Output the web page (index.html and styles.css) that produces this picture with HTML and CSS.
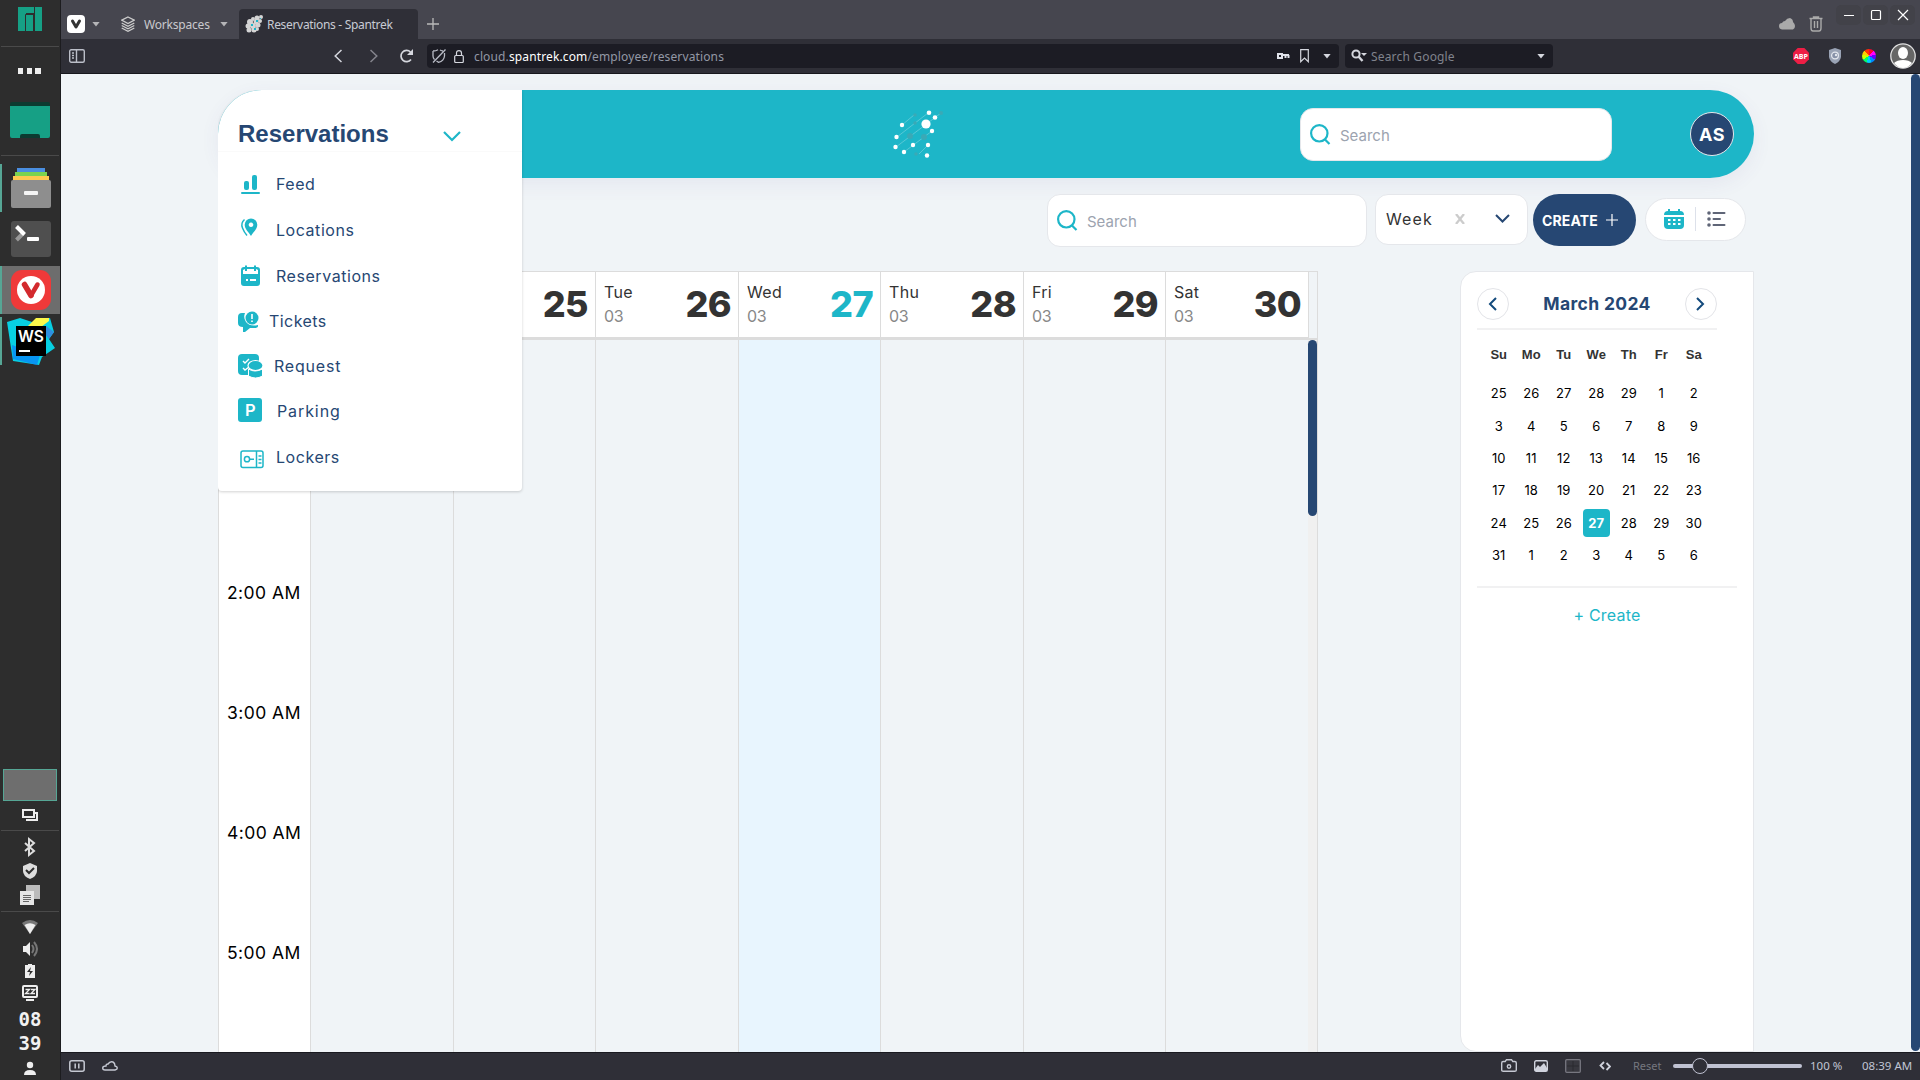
FILE: index.html
```html
<!DOCTYPE html>
<html lang="en">
<head>
<meta charset="utf-8">
<title>Reservations - Spantrek</title>
<link rel="stylesheet" href="styles.css">
</head>
<body>
<div class="desktop">
  <aside class="dock">
    <svg class="slot" width="60" height="46"><path fill="#16a085" d="M18 7h16v6h-8v18h-8zM26 15h7v16h-7zM35 7h7v24h-7z"/><path fill="none" stroke="#2d2d2d" d="M34.500 7v8M25.500 31V14.500H34"/></svg>
    <hr class="dock-line">
    <svg class="slot" width="60" height="48"><path fill="#eee" d="M18 21h5v6h-5zM27 21h5v6h-5zM35 21h6v6h-6z"/></svg>
    <svg class="slot" width="60" height="60"><rect x="10" y="7" width="40" height="36" rx="2" fill="#0c3b30"/><path fill="#16a085" d="M10 11h40v30q0 2-2 2h-8v-2q0-2-2-2H22q-2 0-2 2v2h-8q-2 0-2-2z"/></svg>
    <hr class="dock-line">
    <div class="tasks">
      <div class="task"><svg width="60" height="48"><path fill="#4a8ee0" d="M17 4h28v6H17z"/><path fill="#7bd34f" d="M15 8h32v6H15z"/><path fill="#ffc94f" d="M13 12h36v8H13z"/><rect x="11" y="16" width="40" height="28" rx="2" fill="#8e8e8e"/><rect x="24" y="27" width="14" height="4" rx="1" fill="#f5f5f5"/></svg></div>
      <div class="task idle"><svg width="60" height="48"><rect x="11" y="6" width="40" height="36" rx="3" fill="#4f4f4f"/><path d="M16.500 25l7-7" stroke="#999" stroke-width="4"/><path d="M16.500 11.500l8 8" stroke="#fff" stroke-width="4"/><rect x="27" y="22" width="12" height="4" rx="1" fill="#fff"/></svg></div>
      <div class="task active"><svg width="60" height="48"><rect x="11" y="4" width="40" height="40" rx="11" fill="#ef3939"/><circle cx="31" cy="24" r="14" fill="#fff"/><path d="M24.500 18.500l6.500 11" fill="none" stroke="#d32a2e" stroke-width="5.500" stroke-linecap="round"/><path d="M31 29.500l6.500-11" fill="none" stroke="#d32a2e" stroke-width="4.500" stroke-linecap="round"/></svg></div>
      <div class="task"><svg width="60" height="48"><path fill="#07cfe2" d="M7 5l13-4 12 4 18-4 4 14-5 7 6 9-13 9-3 8-26-4z"/><path fill="#087cfa" d="M12 28l28 10-3 10-24-6z" opacity=".7"/><path fill="#2f8fe0" d="M54 15l-8-6-3 6 6 7z"/><path fill="#fcf84a" d="M28 9l8-8h13v3l-8 6z"/><path fill="#000" d="M16 9h30v30H16z"/><text x="18" y="25" class="ws" textLength="26" lengthAdjust="spacingAndGlyphs">WS</text><path fill="#fff" d="M19 33h11v2H19z"/></svg></div>
    </div>
    <div class="dock-tray">
      <div class="pager"></div>
      <svg class="slot" width="60" height="29"><path fill="none" stroke="#eee" stroke-width="2" d="M23 9h11v7H23z"/><path fill="none" stroke="#eee" stroke-width="2" d="M35 12h2v7H26"/></svg>
      <hr class="dock-line">
      <svg class="slot pad4" width="60" height="24"><path fill="none" stroke="#ddd" stroke-width="2" d="M25 8l9 8-5 4V4l5 4-9 8"/></svg>
      <svg class="slot" width="60" height="24"><path fill="#ddd" d="M30 4l7 3v5q0 5-7 8-7-3-7-8V7z"/><path fill="none" stroke="#2d2d2d" stroke-width="2" d="M26 11l3 3 5-5"/></svg>
      <svg class="slot" width="60" height="24"><path fill="#bbb" d="M26 2h14v14H26z"/><path fill="#e6e6e6" d="M20 8h14v14H20z"/><path stroke="#666" d="M23 12.500h8M23 14.500h8M23 16.500h8M23 18.500h6"/></svg>
      <hr class="dock-line low">
      <svg class="slot pad4" width="60" height="22"><path fill="#777" d="M22 7q8-6 16 0l-8 11z"/><path fill="#eee" d="M24.500 9q5.500-3.500 11 0L30 18z"/></svg>
      <svg class="slot" width="60" height="22"><path fill="#eee" d="M23 8h3l4-4v14l-4-4h-3z"/><path fill="none" stroke="#777" stroke-width="2" d="M32 7q3 4 0 8M34 4q6 7 0 14"/></svg>
      <svg class="slot" width="60" height="22"><path fill="#eee" d="M25 5h3V4h4v1h3v13H25z"/><path fill="#2d2d2d" d="M31 7l-4 5h3l-1 4 4-5h-3z"/></svg>
      <svg class="slot" width="60" height="22"><rect x="23" y="4" width="14" height="11" rx="1" fill="none" stroke="#eee" stroke-width="2"/><path fill="none" stroke="#eee" stroke-width="1.300" d="M25.500 7.500h4l-4 4h4M31 7.500h4l-4 4h4"/><path fill="#eee" d="M26 17h8v2h-8z"/></svg>
      <div class="clock">08<br>39</div>
      <svg class="slot" width="60" height="23"><circle cx="30" cy="8" r="3.200" fill="#eee"/><path fill="#eee" d="M24 18q0-5 6-5t6 5z"/></svg>
    </div>
  </aside>

  <section class="browser">
    <div class="tabstrip">
      <svg width="18" height="18"><rect width="18" height="18" rx="4" fill="#fff"/><path d="M5.500 6l3.500 6 3.500-6" fill="none" stroke="#333" stroke-width="3" stroke-linecap="round" stroke-linejoin="round"/></svg>
      <i class="caret dim c1"></i>
      <svg class="layers" width="14" height="16" fill="none" stroke="#ccc" stroke-width="1.300"><path d="M7 1l6.300 3.200L7 7.500.700 4.200zM.700 7L7 10.300 13.300 7M.700 9.500L7 12.800l6.300-3.300M.700 12L7 15.300l6.300-3.300"/></svg>
      <span class="workspaces">Workspaces</span>
      <i class="caret dim"></i>
      <div class="tab">
        <svg width="18" height="18"><g fill="#d5d5d5"><circle cx="12" cy="3" r="2.500"/><circle cx="16" cy="2" r="2"/><circle cx="8" cy="4" r="2"/><circle cx="5" cy="7" r="3"/><circle cx="11" cy="7" r="2.500"/><circle cx="15" cy="6" r="2"/><circle cx="3" cy="11" r="2.500"/><circle cx="8" cy="11" r="3"/><circle cx="13" cy="10" r="2.500"/><circle cx="4" cy="15" r="2.500"/><circle cx="9" cy="15" r="2.500"/><circle cx="12" cy="14" r="2"/></g><path fill="#1db6c8" d="M6 9h2v2H6zM11 5h2v2h-2zM9 13h2v2H9zM15 3h1v1h-1z"/></svg>
        <span class="tab-title">Reservations - Spantrek</span>
      </div>
      <svg class="plus-tab" width="12" height="12"><path d="M6 0v12M0 6h12" stroke="#bbb" stroke-width="1.300"/></svg>
      <svg class="push" width="16" height="12" fill="#aaa"><path d="M3 11.500Q0 11 0 8t3-3q1-2 3-2 2-3 5-3 3 1 3 4 2 2 2 4 0 3-2 3.500z"/></svg>
      <svg class="trash" width="14" height="16" fill="none" stroke="#aaa" stroke-width="1.400"><path d="M.500 2.500h13M4.500 2V1h5v1M2 3v9q0 3 2 3h6q2 0 2-3V3M5.500 5v7M8.500 5v7"/></svg>
      <div class="winbtns">
        <svg width="25" height="20"><path d="M8 10.500h10" stroke="#fff" stroke-width="1.200"/></svg>
        <svg width="25" height="20"><rect x="8.500" y="5.500" width="9" height="9" rx="1" fill="none" stroke="#fff" stroke-width="1.200"/></svg>
        <svg width="25" height="20"><path d="M8 5l10 10M18 5L8 15" stroke="#fff" stroke-width="1.200"/></svg>
      </div>
    </div>
    <div class="addressbar">
      <svg width="16" height="14" fill="none" stroke="#bbbec8" stroke-width="1.400"><rect x=".700" y=".700" width="14.600" height="12.600" rx="1.500"/><path d="M7.500 1v12M3 4h2M3 6.500h2M3 9h2"/></svg>
      <svg class="back" width="8" height="14" fill="none" stroke="#d5d7de" stroke-width="1.500"><path d="M7.500 1L1.200 7l6.300 6"/></svg>
      <svg class="fwd" width="8" height="14" fill="none" stroke="#85858d" stroke-width="1.500"><path d="M.500 1l6.300 6-6.300 6"/></svg>
      <svg class="reload" width="15" height="14"><path d="M12 10.500A5.600 5.600 0 1 1 11.500 3" fill="none" stroke="#d5d7de" stroke-width="1.700"/><path d="M14 0v6H8z" fill="#d5d7de"/></svg>
      <div class="urlfield">
        <svg width="14" height="14" fill="none" stroke="#b9bcc6" stroke-width="1.300"><path d="M1 2q3 0 5-1.300M8 1q2 1 3 1M1 2v5q0 2 1.500 3.500M12.500 4v3q-.500 5-6 6.300L4.500 12M1 13.500L13.500.500"/></svg>
        <svg class="lock" width="10" height="13" fill="none" stroke="#d5d7de" stroke-width="1.200"><rect x=".700" y="5.500" width="8.600" height="7" rx="1"/><path d="M2.500 5.500V3q0-2.300 2.500-2.300T7.500 3v2.500"/></svg>
        <span class="url">cloud.<b>spantrek.com</b>/employee/reservations</span>
        <svg class="push" width="13" height="8" fill="none" stroke="#e0e2ea" stroke-width="2"><path d="M1 2h4v4H1zM5 3h7M8.500 3v3M11.500 3v3"/></svg>
        <svg class="bm" width="9" height="14" fill="none" stroke="#d5d7de" stroke-width="1.200"><path d="M.700.700h7.600v12L4.500 9 .700 12.700z"/></svg>
        <i class="caret"></i>
      </div>
      <div class="searchfield">
        <svg width="16" height="14"><circle cx="5" cy="5" r="3.600" fill="none" stroke="#d5d7de" stroke-width="2"/><path d="M7.500 7.500l4 4.500" stroke="#d5d7de" stroke-width="2.400"/><path d="M10 4h6l-3 3z" fill="#d5d7de"/></svg>
        <span class="sg">Search Google</span>
        <i class="caret push"></i>
      </div>
      <svg class="abp" width="16" height="16"><path fill="#ed1e45" d="M4.700 0h6.600L16 4.700v6.600L11.300 16H4.700L0 11.300V4.700z"/><text x="1" y="10.800" class="abp-t" textLength="14" lengthAdjust="spacingAndGlyphs">ABP</text></svg>
      <svg class="ext" width="12" height="16"><path fill="#9aa3b5" d="M6 0l6 2v7q-1 5-6 7-5-2-6-7V2z"/><circle cx="6" cy="7.500" r="3.400" fill="#8791a8" stroke="#e3e7ee" stroke-width="1.300"/><circle cx="7" cy="7" r="1.200" fill="#e3e7ee"/></svg>
      <i class="wheel"></i>
      <svg class="profile" width="26" height="26"><circle cx="13" cy="13" r="12.200" fill="#666" stroke="#e0e0e0" stroke-width="1.300"/><ellipse cx="13" cy="10" rx="5" ry="6" fill="#fff"/><path fill="#fff" d="M4 20q3-3 9-3t9 3q-4 5-9 5t-9-5z"/></svg>
    </div>

    <main class="page">
      <header class="topbar">
        <svg class="logo" width="50" height="50" fill="#fff"><path d="M9 15l12-10M4 27L35 3M3 37L48 3M11 42l28-21M26 44l9-9" stroke="#7fd3de" stroke-width=".6" fill="none"/><g fill="#3aa9b6"><circle cx="22" cy="5" r="1.800"/><circle cx="22" cy="13" r="1.800"/><circle cx="17" cy="26" r="3"/><circle cx="31" cy="27" r="3"/><circle cx="23" cy="44" r="1.800"/><circle cx="48" cy="3" r="2"/></g><circle cx="36" cy="2.700" r="2.300"/><circle cx="42" cy="7.500" r="2.300"/><circle cx="33" cy="14" r="4.600"/><circle cx="9" cy="15" r="2.200"/><circle cx="39" cy="21" r="2.200"/><circle cx="3.500" cy="27" r="2.200"/><circle cx="2.500" cy="37" r="2.200"/><circle cx="20" cy="35" r="2.200"/><circle cx="35" cy="35" r="2.200"/><circle cx="11" cy="42" r="2.200"/><circle cx="34" cy="45.500" r="2.200"/></svg>
        <div class="search top-search"><svg width="21" height="21"><circle cx="9.300" cy="9.300" r="8.200"/><path d="M15 15.500l4.500 4.500"/></svg><span>Search</span></div>
        <div class="avatar">AS</div>
      </header>

      <div class="toolbar">
        <div class="search"><svg width="21" height="21"><circle cx="9.300" cy="9.300" r="8.200"/><path d="M15 15.500l4.500 4.500"/></svg><span>Search</span></div>
        <div class="select"><span class="week">Week</span>
          <svg class="clear" width="10" height="10"><path d="M1 0l8 10M9 0L1 10" stroke="#ccc" stroke-width="2.300"/></svg>
          <svg class="chev" width="15" height="9"><path d="M1 1l6.500 6.500L14 1" fill="none" stroke="#264773" stroke-width="2"/></svg></div>
        <div class="create"><span>CREATE</span><svg width="12" height="12"><path d="M6 0v12M0 6h12" stroke="#fff" stroke-width="1.200"/></svg></div>
        <div class="views">
          <svg width="20" height="20"><path fill="#1db6c8" d="M0 6q0-4 4-4V0h2v2h8V0h2v2q4 0 4 4z"/><path fill="#1db6c8" d="M0 8h20v8q0 4-4 4H4q-4 0-4-4z"/><path fill="#fff" d="M4 10h2.500v2H4zM9 10h2.500v2H9zM14 10h2.500v2H14zM4 14h2.500v2H4zM9 14h2.500v2H9zM14 14h2.500v2H14z"/></svg>
          <i class="vline"></i>
          <svg width="19" height="16"><g fill="#5f6577"><circle cx="2" cy="2" r="1.800"/><circle cx="2" cy="8" r="1.800"/><circle cx="2" cy="14" r="1.800"/></g><path d="M6.500 2h11M6.500 8h6.500M6.500 14h11" stroke="#5f6577" stroke-width="2" stroke-linecap="round"/></svg>
        </div>
      </div>

      <div class="content">
        <section class="calendar">
          <div class="cal-row cal-head">
            <div class="cell"></div>
            <div class="cell"></div>
            <div class="cell end"><strong>25</strong></div>
            <div class="cell"><p>Tue<small>03</small></p><strong>26</strong></div>
            <div class="cell now"><p>Wed<small>03</small></p><strong>27</strong></div>
            <div class="cell"><p>Thu<small>03</small></p><strong>28</strong></div>
            <div class="cell"><p>Fri<small>03</small></p><strong>29</strong></div>
            <div class="cell"><p>Sat<small>03</small></p><strong>30</strong></div>
            <div class="gutter"></div>
          </div>
          <div class="cal-row cal-body">
            <div class="col times"><span>2:00 AM</span><span>3:00 AM</span><span>4:00 AM</span><span>5:00 AM</span></div>
            <div class="col"></div><div class="col"></div><div class="col"></div><div class="col today"></div><div class="col"></div><div class="col"></div><div class="col last"></div>
            <div class="track"><div class="thumb"></div></div>
          </div>
        </section>

        <aside class="mini">
          <div class="mini-head">
            <span class="round"><svg width="9" height="14"><path d="M8 1L2 7l6 6"/></svg></span>
            <h2>March 2024</h2>
            <span class="round"><svg width="9" height="14"><path d="M1 1l6 6-6 6"/></svg></span>
          </div>
          <div class="grid wk"><b>Su</b><b>Mo</b><b>Tu</b><b>We</b><b>Th</b><b>Fr</b><b>Sa</b></div>
          <div class="grid days">
            <span>25</span><span>26</span><span>27</span><span>28</span><span>29</span><span>1</span><span>2</span>
            <span>3</span><span>4</span><span>5</span><span>6</span><span>7</span><span>8</span><span>9</span>
            <span>10</span><span>11</span><span>12</span><span>13</span><span>14</span><span>15</span><span>16</span>
            <span>17</span><span>18</span><span>19</span><span>20</span><span>21</span><span>22</span><span>23</span>
            <span>24</span><span>25</span><span>26</span><span class="sel">27</span><span>28</span><span>29</span><span>30</span>
            <span>31</span><span>1</span><span>2</span><span>3</span><span>4</span><span>5</span><span>6</span>
          </div>
          <div class="add">+ Create</div>
        </aside>
      </div>

      <nav class="menu">
        <div class="menu-head"><h1>Reservations</h1><svg width="18" height="11"><path d="M1 1l8 8 8-8" fill="none" stroke="#1db6c8" stroke-width="2.200"/></svg></div>
        <div class="menu-list">
          <div class="item"><svg width="28" height="28"><rect x="6" y="11" width="5" height="9" rx="2"/><rect x="14" y="5" width="5" height="15" rx="2"/><rect x="3" y="22" width="19" height="2" rx="1"/></svg><span>Feed</span></div>
          <div class="item"><svg width="28" height="28"><path fill-rule="evenodd" d="M13 2.500a6.300 6.300 0 0 1 6.300 6.300c0 4.200-3.800 7.200-6.300 11.200-2.500-4-6.300-7-6.300-11.200A6.300 6.300 0 0 1 13 2.500zM13 6.500a2.300 2.300 0 1 0 .01 0z"/><path class="ln" d="M6.500 3.500Q2.500 7 4.500 12q1.500 4 4.500 7.500"/></svg><span>Locations</span></div>
          <div class="item"><svg width="28" height="28"><path fill-rule="evenodd" d="M6 5H7V3.500h2V5h7V3.500h2V5h1q3 0 3 3v13q0 3-3 3H6q-3 0-3-3V8q0-3 3-3zM5 8v4h15V8l-2-1v2h-2V7H9v2H7V7zM8 17v2h2v-2zM12 17v2h6v-2z"/></svg><span>Reservations</span></div>
          <div class="item r44 tickets"><svg width="28" height="28"><path d="M4 6h3q-2 5 1 9 4 5 12 3v1q0 2-4 2h-4l-5 4h-2v-5q-5 0-5-4v-6q0-4 4-4z"/><circle cx="14" cy="11" r="6.500"/><path stroke="#fff" stroke-width="1.600" d="M14 7v5M14 13.500v1.600"/></svg><span>Tickets</span></div>
          <div class="item r45 request"><svg width="28" height="28"><rect y="2" width="21" height="21" rx="4"/><path d="M5 9l2 2 4-4M5 16l2 2 4-3" fill="none" stroke="#fff" stroke-width="1.400"/><path stroke="#fff" stroke-width="1" d="M10.500 17q6 4 14 0v7q-7 4-14 0z"/><ellipse cx="17.500" cy="13.500" rx="7.500" ry="5" stroke="#fff" stroke-width="1.200"/></svg><span>Request</span></div>
          <div class="item parking"><svg width="28" height="28"><rect y="1" width="24" height="24" rx="3"/><text x="7" y="18.800" class="pk">P</text></svg><span>Parking</span></div>
          <div class="item"><svg width="28" height="28"><rect class="ln" x="3" y="8" width="22" height="16.500" rx="2"/><path class="ln" d="M18.500 8v16M20.500 13h3M20.500 16.500h3M20.500 20h3M11 16.200h5"/><circle class="ln" cx="9" cy="16.200" r="2.600"/></svg><span>Lockers</span></div>
        </div>
      </nav>
      <div class="page-scroll"></div>
    </main>

    <footer class="status">
      <svg width="16" height="12" fill="none" stroke="#c5c8d2" stroke-width="1.500"><rect x=".800" y=".800" width="14.400" height="10.400" rx="2"/><path d="M6.200 3.500v5M9.800 3.500v5"/></svg>
      <svg class="cl" width="16" height="10" fill="none" stroke="#c5c8d2" stroke-width="1.400"><path d="M3 9Q.700 9 .700 7T4 5q0-2 2-2 2-3 5-2 2 1 2 4 2.300.500 2.300 2T13 9z"/></svg>
      <svg class="push" width="16" height="13" fill="none" stroke="#c5c8d2" stroke-width="1.400"><path d="M.700 4q0-1.500 1.500-1.500h2L5.500.700h5l1.300 1.800h2q1.500 0 1.500 1.500v7q0 1.300-1.500 1.300H2.200Q.700 12.300.700 11z"/><circle cx="8" cy="7.500" r="1.700"/></svg>
      <svg class="im" width="14" height="12"><rect x=".700" y=".700" width="12.600" height="10.600" rx="1.500" fill="none" stroke="#d0d3dd" stroke-width="1.400"/><path fill="#d0d3dd" d="M1 9l3-4 2 2 4-4 3 5v3H1z"/></svg>
      <svg class="sq" width="16" height="14"><rect x=".700" y=".700" width="14.600" height="12.600" rx="1" fill="#38383f" stroke="#777780" stroke-width="1.300"/><path stroke="#2b2b31" d="M8 2v10M2 7h12"/></svg>
      <svg class="cd" width="12" height="10" fill="none" stroke="#d0d3dd" stroke-width="1.800"><path d="M5 1L1.500 4.500 5 8M7.500 2L11 5.500 7.500 9"/></svg>
      <span class="reset">Reset</span>
      <span class="slider"><i></i></span>
      <span class="pct">100 %</span>
      <span class="time">08:39 AM</span>
    </footer>
  </section>
</div>
</body>
</html>
```
FILE: styles.css
```css
* { box-sizing: border-box; }
body { margin: 0; overflow: hidden; font-family: Inter, "Noto Sans", sans-serif; }
svg { display: block; flex: none; }
.desktop { display: flex; width: 1920px; height: 1080px; }
.push { margin-left: auto !important; }

/* Desktop panel */
.dock { width: 61px; flex: none; background: #2d2d2d; border-right: 1px solid #1c1c1f; display: flex; flex-direction: column; }
.dock-line { width: 58px; height: 1px; border: 0; margin: 0 1px; background: #4a4a4a; flex: none; }
.tasks { display: flex; flex-direction: column; gap: 3px; padding-top: 8px; }
.task { height: 48px; border-left: 2px solid #56a695; }
.task svg { margin-left: -2px; }
.task.idle { border-color: transparent; }
.task.active { background: #6d6d6d; }
.ws { font: 600 16px Inter, sans-serif; fill: #fff; }
.dock-tray { margin-top: auto; display: flex; flex-direction: column; }
.pager { width: 54px; height: 32px; margin-left: 3px; background: #6e6e6e; border: 1px solid #56a695; }
.pad4 { margin-top: 4px; }
.dock-line.low { margin-top: 4px; }
.clock { margin-top: 3px; height: 50px; text-align: center; font: bold 19px/24px "DejaVu Sans Mono", monospace; color: #f2f2f2; }

/* Browser chrome */
.browser { flex: 1; min-width: 0; display: flex; flex-direction: column; font-family: "Noto Sans", sans-serif; }
.tabstrip { height: 39px; background: #46464f; display: flex; align-items: center; padding: 9px 5px 0 6px; flex: none; color: #c9c9cd; font-size: 12px; }
.caret { width: 8px; height: 5px; background: #d5d7de; clip-path: polygon(0 0, 100% 0, 50% 100%); flex: none; }
.caret.dim { background: #b5b5b8; }
.c1 { margin-left: 7px; }
.layers { margin-left: 21px; }
.workspaces { width: 76px; margin-left: 9px; letter-spacing: -.2px; }
.tab { width: 179px; height: 30px; margin-left: 11px; background: #2f2f37; border-radius: 4px 4px 0 0; display: flex; align-items: center; padding-left: 6px; gap: 4px; color: #c8cbd4; white-space: nowrap; }
.tab-title { letter-spacing: -.32px; }
.plus-tab { margin-left: 9px; }
.trash { margin-left: 14px; }
.winbtns { display: flex; gap: 2px; margin: -18px 0 0 13px; }
.winbtns svg { background: #424249; border-radius: 5px; }
.addressbar { height: 35px; background: #2f2f37; border-bottom: 1px solid #18181d; display: flex; align-items: center; padding: 0 4px 0 8px; flex: none; font-size: 12px; }
.back { margin-left: 249px; }
.fwd { margin-left: 28px; }
.reload { margin-left: 21px; }
.urlfield, .searchfield { height: 24px; background: #1c1c24; border-radius: 4px; display: flex; align-items: center; padding-left: 5px; color: #9398a5; }
.urlfield { width: 912px; margin-left: 13px; padding-right: 8px; }
.lock { margin-left: 8px; }
.url { margin-left: 10px; letter-spacing: .13px; white-space: nowrap; }
.url b { font-weight: 400; color: #fff; }
.bm { margin: 0 14px 0 10px; }
.searchfield { width: 208px; margin-left: 6px; padding: 0 8px 0 6px; }
.sg { margin-left: 4px; color: #80838c; letter-spacing: .17px; }
.abp { margin-left: auto; }
.abp-t { font: 700 7.500px "Open Sans", sans-serif; fill: #fff; }
.ext { margin-left: 20px; }
.wheel { width: 14px; height: 14px; margin-left: 21px; border-radius: 50%; background: conic-gradient(#f03 0 40deg, #f0f 0 80deg, #60f 0 120deg, #08f 0 160deg, #0cf 0 200deg, #0f6 0 240deg, #cf0 0 280deg, #fc0 0 320deg, #f30 0); }
.profile { margin-left: 14px; }
.status { height: 28px; background: #2f2f37; border-top: 1px solid #1a1a20; display: flex; align-items: center; padding: 0 8px 2px; font-size: 12px; color: #c0c5d4; flex: none; white-space: nowrap; }
.cl { margin-left: 17px; }
.im { margin-left: 17px; }
.sq { margin-left: 17px; }
.cd { margin-left: 18px; }
.reset { width: 30px; margin-left: 22px; font-size: 11px; color: #75777f; }
.slider { width: 129px; height: 4px; margin-left: 10px; border-radius: 2px; background: #c0c2d2; padding-left: 19px; }
.slider i { display: block; width: 16px; height: 16px; margin-top: -6px; border: 1px solid #c0c2d2; border-radius: 50%; background: #2f2f37; }
.pct { width: 52px; margin-left: 8px; font-size: 11.500px; }
.time { width: 50px; font-size: 11.500px; }

/* Page */
.page { position: relative; height: 978px; background: #f0f4f7; padding: 16px 166px 0 157px; overflow: hidden; font-family: Inter, sans-serif; }
.topbar { height: 88px; background: #1db6c8; border-radius: 44px; box-shadow: 0 6px 20px rgba(80, 70, 140, .07); display: flex; align-items: center; padding: 0 20px 0 675px; }
.logo { margin-top: 1px; }
.search { width: 320px; height: 53px; background: #fff; border: 1px solid #e5e7eb; border-radius: 13px; display: flex; align-items: center; gap: 9px; padding-left: 9px; color: #9ca3af; font-size: 15px; letter-spacing: 0; }
.search svg { fill: none; stroke: #1db6c8; stroke-width: 2.200; }
.search span { margin-top: 1px; }
.top-search { width: 312px; margin: 1px 0 0 357px; }
.avatar { width: 44px; height: 44px; margin-left: auto; border-radius: 50%; background: #264773; border: 1px solid #e5e7eb; color: #fff; font-size: 18px; font-weight: 700; letter-spacing: .4px; display: grid; place-items: center; }
.toolbar { display: flex; align-items: flex-start; padding: 16px 8px 0 829px; height: 93px; }
.select { width: 153px; height: 51px; margin-left: 8px; background: #fff; border: 1px solid #e5e7eb; border-radius: 13px; display: flex; align-items: center; padding: 0 17px 2px 10px; font-size: 16px; color: #333; }
.week { width: 69px; letter-spacing: 1.100px; }
.chev { margin-left: auto; }
.create { width: 103px; height: 52px; margin: 0 0 0 5px; border-radius: 26px; background: #264773; color: #fff; display: flex; align-items: center; gap: 6px; padding-left: 9px; font-size: 14px; font-weight: 700; letter-spacing: .15px; }
.create span { width: 58px; }
.views { width: 101px; height: 43px; margin: 4px 0 0 9px; background: #fff; border: 1px solid #e5e7eb; border-radius: 22px; display: flex; align-items: center; padding: 0 0 2px 18px; }
.vline { width: 1px; height: 24px; margin: 0 11px; background: #dde1ea; }
.content { display: flex; justify-content: space-between; height: 781px; }

/* Week calendar */
.calendar { width: 1100px; height: 800px; border: 1px solid #dcdcdc; }
.cal-row { display: grid; grid-template-columns: 92px 143px 142px 143px 142px 143px 142px 143px 8px; }
.cell { height: 68px; background: #fff; border-right: 1px solid #dcdcdc; border-bottom: 3px solid #dcdcdc; display: flex; justify-content: space-between; align-items: center; padding: 0 7px 2px 8px; color: #333; }
.cell.end { justify-content: flex-end; }
.cell p { margin: 0; font-size: 16px; line-height: 24px; letter-spacing: .3px; }
.cell small { display: block; color: #888; font-size: 16px; letter-spacing: -.3px; }
.cell strong { font-size: 36px; font-weight: 800; letter-spacing: -.6px; }
.cell.now strong { color: #1db6c8; }
.gutter { border-bottom: 2px solid #dcdcdc; }
.col { height: 720px; border-right: 1px solid #dcdcdc; }
.col.last { border: 0; }
.times { background: #fff; padding: 193px 0 0 8px; color: #000; font-size: 17.500px; }
.times span { display: block; height: 120px; line-height: 120px; letter-spacing: .45px; white-space: nowrap; }
.today { background: #e8f5fe; }
.track { margin-left: -1px; background: #f0f0f0; }
.thumb { height: 176px; border-radius: 5px; background: #264773; }

/* Month panel */
.mini { width: 294px; height: 781px; background: #fff; border: 1px solid #e5e7eb; border-radius: 16px 0 0 16px; padding: 16px 16px 0; }
.mini-head { width: 240px; height: 42px; border-bottom: 2px solid #f1f1f2; display: flex; align-items: flex-start; justify-content: space-between; }
.mini-head h2 { margin: 0; font-size: 17.500px; line-height: 32px; font-weight: 700; color: #264773; letter-spacing: .35px; }
.round { width: 32px; height: 32px; border: 1px solid #e3e4e8; border-radius: 50%; display: grid; place-items: center; }
.round svg { margin-right: 1px; }
.round path { fill: none; stroke: #134a7c; stroke-width: 2; }
.grid { display: grid; grid-template-columns: repeat(7, 32.500px); margin-left: 5.500px; text-align: center; }
.wk { margin-top: 17px; font: 700 13px/16px "Liberation Sans", Arial, sans-serif; color: #333; }
.days { margin: 14px 0 0 5.500px; font-size: 13px; font-weight: 400; color: #000; grid-auto-rows: 32.400px; place-items: center; letter-spacing: .1px; }
.sel { width: 27px; height: 28px; line-height: 28px; border-radius: 4px; background: #1db6c8; color: #fff; font-weight: 700; }
.add { margin-top: 15px; border-top: 2px solid #f1f1f2; height: 60px; line-height: 55px; text-align: center; color: #1db6c8; font-size: 16px; letter-spacing: .2px; }

/* Navigation menu, opened over the page */
.menu { position: absolute; left: 157px; top: 16px; width: 304px; height: 401px; background: #fff; border-radius: 44px 0 4px 4px; box-shadow: 0 1px 3px rgba(0, 0, 0, .18); clip-path: inset(0 -4px -6px 0); }
.menu-head { height: 62px; border-bottom: 1px solid #fafafa; display: flex; align-items: center; justify-content: space-between; padding: 31px 61px 0 20px; }
.menu-head h1 { margin: -4px 0 0; font: 700 24px/28px "Liberation Sans", Arial, sans-serif; color: #264773; }
.menu-list { margin-top: 9px; }
.item { height: 46px; display: flex; align-items: center; padding-left: 20px; font-size: 16px; letter-spacing: .55px; color: #264773; }
.item svg { fill: #1db6c8; margin-right: 10px; }
.item .ln { fill: none; stroke: #1db6c8; stroke-width: 1.500; }
.r44 { height: 44px; }
.r45 { height: 45px; }
.tickets { letter-spacing: .45px; }
.tickets svg { margin-right: 3px; }
.request { letter-spacing: .8px; }
.request svg { margin-right: 8px; }
.parking { letter-spacing: .9px; }
.parking svg { margin-right: 11px; }
.item .pk { font: 600 16.500px Inter, sans-serif; fill: #fff; letter-spacing: 0; }
.page-scroll { position: absolute; right: 0; top: 0; width: 9px; height: 977px; border-radius: 5px; background: #264773; }
```
